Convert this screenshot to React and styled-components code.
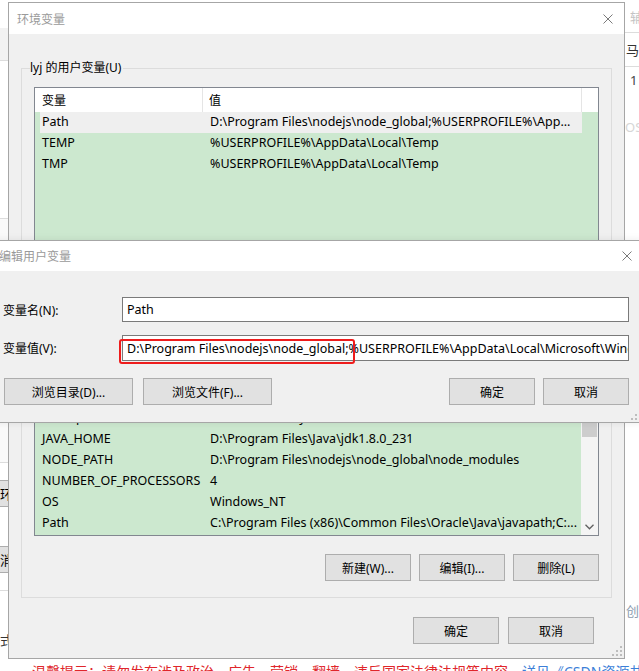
import React from 'react';
import styled, { createGlobalStyle } from 'styled-components';

const GlobalStyle = createGlobalStyle`
  html, body { margin: 0; padding: 0; background: #fff; }
  body {
    font-family: "Noto Sans", "Noto Sans CJK SC", sans-serif;
    font-size: 12px;
    color: #000;
    overflow: hidden;
  }
  * { box-sizing: border-box; }
`;

const UI_FONT = `"Noto Sans", "Noto Sans CJK SC", sans-serif`;

/* ---------- desktop & page behind ---------- */
const Desktop = styled.div`
  position: relative;
  width: 639px;
  height: 671px;
  overflow: hidden;
  background: #fff;
`;

const Page = styled.div`
  display: grid;
  grid-template-columns: 8px 1fr 14px;
  height: 100%;
  font-family: ${UI_FONT};
`;

const Rail = styled.div`
  display: flex;
  flex-direction: column;
  min-width: 0;
`;

const RailBand = styled.div`
  flex: none;
  height: ${p => p.$h}px;
  background: ${p => p.$bg || '#fff'};
  border-bottom: ${p => (p.$line ? '1px solid #dcdcdc' : '0')};
  display: flex;
  align-items: center;
  font-size: 13px;
  color: ${p => p.$color || '#333'};
  white-space: nowrap;
  padding-left: ${p => p.$pl || 0}px;
`;

const RailButton = styled.div`
  flex: none;
  margin-top: ${p => p.$mt}px;
  margin-left: -40px;
  width: 80px;
  height: 27px;
  border: 1px solid #adadad;
  background: #e1e1e1;
  font-size: 13px;
  display: flex;
  align-items: center;
  padding-left: 39px;
  white-space: nowrap;
`;

const RailText = styled.div`
  flex: none;
  margin-top: ${p => p.$mt}px;
  margin-left: ${p => p.$ml || 0}px;
  font-size: 13px;
  line-height: 18px;
  color: ${p => p.$color || '#333'};
  white-space: nowrap;
`;

const PageMiddle = styled.div`
  display: flex;
  flex-direction: column;
  min-width: 0;
`;

const Notice = styled.div`
  margin-top: 662px;
  padding-left: 24px;
  font-size: 14px;
  line-height: 20px;
  color: #e0262b;
  white-space: nowrap;
`;

const NoticeLink = styled.span`
  color: #3d7fd8;
`;

/* ---------- windows ---------- */
const MainWindow = styled.section`
  position: absolute;
  left: 8px;
  top: 2px;
  width: 617px;
  height: 657px;
  border: 1px solid #a6a6a6;
  background: #f0f0f0;
  display: flex;
  flex-direction: column;
  font-family: ${UI_FONT};
`;

const EditWindow = styled.section`
  position: absolute;
  left: -10px;
  top: 240px;
  width: 654px;
  height: 183px;
  border: 1px solid #a6a6a6;
  background: #f0f0f0;
  display: flex;
  flex-direction: column;
  font-family: ${UI_FONT};
  box-shadow: 0 0 8px rgba(0, 0, 0, 0.08);
`;

const TitleBar = styled.header`
  flex: none;
  height: ${p => p.$h}px;
  background: #fff;
  display: flex;
  align-items: center;
  justify-content: space-between;
  padding: 0 11px 0 8px;
`;

const TitleText = styled.span`
  font-size: 12px;
  color: #9a9a9a;
`;

const CloseGlyph = () => (
  <svg width="10" height="10" viewBox="0 0 10 10">
    <path d="M0.5 0.5 L9.5 9.5 M9.5 0.5 L0.5 9.5" stroke="#7a7a7a" strokeWidth="1" fill="none" />
  </svg>
);

const Grip = styled.div`
  position: absolute;
  right: 2px;
  bottom: 2px;
  width: 10px;
  height: 10px;
  display: flex;
`;

const GripGlyph = () => (
  <svg width="10" height="10" viewBox="0 0 10 10">
    {[[8, 0], [8, 4], [4, 4], [8, 8], [4, 8], [0, 8]].map(([x, y]) => (
      <rect key={`${x}-${y}`} x={x} y={y} width="2" height="2" fill="#bdbdbd" />
    ))}
  </svg>
);

/* ---------- main dialog body ---------- */
const DialogBody = styled.div`
  flex: 1;
  display: flex;
  flex-direction: column;
  padding: 26px 12px 0 12px;
`;

const GroupBox = styled.fieldset`
  margin: ${p => p.$mt || 0}px 0 0 0;
  padding: 11px 12px ${p => p.$pb}px 12px;
  border: 1px solid #dcdcdc;
  min-width: 0;
  display: flex;
  flex-direction: column;
`;

const Legend = styled.legend`
  margin-left: -4px;
  padding: 0 2px 0 0;
  font-size: 12px;
  line-height: 16px;
`;

const ListView = styled.div`
  height: ${p => p.$h}px;
  flex: none;
  border: 1px solid #828790;
  background: #cce8cf;
  display: flex;
  overflow: hidden;
`;

const ListMain = styled.div`
  flex: 1;
  display: flex;
  flex-direction: column;
  min-width: 0;
`;

const ListHeader = styled.div`
  flex: none;
  height: 24px;
  background: #fff;
  display: grid;
  grid-template-columns: 168px ${p => (p.$full ? '379px 1fr' : '1fr')};
`;

const HeaderCell = styled.div`
  display: flex;
  align-items: center;
  padding-left: ${p => p.$pl}px;
  border-right: 1px solid #e5e5e5;
  font-size: 12px;
`;

const HeaderFill = styled.div``;

const ListRows = styled.div`
  flex: 1;
  display: flex;
  flex-direction: column;
  justify-content: ${p => (p.$bottom ? 'flex-end' : 'flex-start')};
  padding-bottom: ${p => (p.$bottom ? 1 : 0)}px;
  overflow: hidden;
`;

const Row = styled.div`
  flex: none;
  height: 21px;
  margin-left: 5px;
  width: 542px;
  display: grid;
  grid-template-columns: 163px 1fr;
  align-items: center;
  background: ${p => (p.$selected ? '#efefef' : 'transparent')};
  font-size: 12.5px;
  line-height: 16px;
  white-space: nowrap;
`;

const Cell = styled.span`
  padding-left: ${p => p.$pl}px;
  padding-bottom: 1px;
  overflow: hidden;
`;

const ScrollBar = styled.div`
  flex: none;
  width: 17px;
  background: #f4f4f4;
  display: flex;
  flex-direction: column;
  align-items: center;
`;

const ScrollArrow = styled.div`
  flex: none;
  height: 17px;
  width: 17px;
  display: flex;
  align-items: center;
  justify-content: center;
  margin-top: ${p => (p.$down ? 'auto' : '0')};
`;

const ScrollThumb = styled.div`
  flex: none;
  width: 15px;
  margin-top: 33px;
  height: 36px;
  background: #cdcdcd;
`;

const ChevronDown = () => (
  <svg width="9" height="6" viewBox="0 0 9 6">
    <path d="M0.5 0.8 L4.5 4.8 L8.5 0.8" stroke="#606060" strokeWidth="1.3" fill="none" />
  </svg>
);

const ChevronUp = () => (
  <svg width="9" height="6" viewBox="0 0 9 6">
    <path d="M0.5 5.2 L4.5 1.2 L8.5 5.2" stroke="#606060" strokeWidth="1.3" fill="none" />
  </svg>
);

const ButtonRow = styled.div`
  display: flex;
  justify-content: ${p => p.$justify || 'flex-end'};
  gap: ${p => p.$gap || 9}px;
  margin-top: ${p => p.$mt || 0}px;
  margin-right: ${p => p.$mr || 0}px;
`;

const ButtonGroup = styled.div`
  display: flex;
  gap: ${p => p.$gap}px;
  margin-left: ${p => p.$ml || 0}px;
`;

const Button = styled.button`
  width: ${p => p.$w}px;
  height: 27px;
  border: 1px solid #adadad;
  background: #e1e1e1;
  font-family: ${UI_FONT};
  font-size: 12px;
  color: #000;
  padding: 0;
  display: flex;
  align-items: center;
  justify-content: center;
`;

/* ---------- edit dialog body ---------- */
const EditBody = styled.div`
  flex: 1;
  display: flex;
  flex-direction: column;
  padding: 26px 14px 0 12px;
`;

const FieldGrid = styled.div`
  display: grid;
  grid-template-columns: 119px 1fr;
  row-gap: 13px;
  align-items: center;
`;

const FieldLabel = styled.label`
  font-size: 12px;
  white-space: nowrap;
`;

const TextBox = styled.div`
  position: relative;
  height: ${p => p.$h}px;
  min-width: 0;
  border: 1px solid #7a7a7a;
  background: #fff;
  display: flex;
  align-items: center;
  padding-left: 4px;
  font-size: 12.5px;
  white-space: nowrap;
`;

const TextClip = styled.span`
  flex: 1;
  min-width: 0;
  overflow: hidden;
  display: block;
`;

const RedMark = styled.div`
  position: absolute;
  left: -4px;
  top: 3px;
  width: 236px;
  height: 25px;
  border: 2.5px solid #ee1c1c;
  border-radius: 3px;
  pointer-events: none;
`;

const userVars = [
  ['Path', 'D:\\Program Files\\nodejs\\node_global;%USERPROFILE%\\App...'],
  ['TEMP', '%USERPROFILE%\\AppData\\Local\\Temp'],
  ['TMP', '%USERPROFILE%\\AppData\\Local\\Temp'],
];

const systemVars = [
  ['ComSpec', 'C:\\WINDOWS\\system32\\cmd.exe'],
  ['JAVA_HOME', 'D:\\Program Files\\Java\\jdk1.8.0_231'],
  ['NODE_PATH', 'D:\\Program Files\\nodejs\\node_global\\node_modules'],
  ['NUMBER_OF_PROCESSORS', '4'],
  ['OS', 'Windows_NT'],
  ['Path', 'C:\\Program Files (x86)\\Common Files\\Oracle\\Java\\javapath;C:...'],
];

function VarList({ rows, height, scroll, selectedIndex }) {
  return (
    <ListView $h={height}>
      <ListMain>
        <ListHeader $full={!scroll}>
          <HeaderCell $pl={7}>变量</HeaderCell>
          <HeaderCell $pl={6}>值</HeaderCell>
          {!scroll && <HeaderFill />}
        </ListHeader>
        <ListRows $bottom={scroll}>
          {rows.map(([k, v], i) => (
            <Row key={k + i} $selected={i === selectedIndex}>
              <Cell $pl={2}>{k}</Cell>
              <Cell $pl={7}>{v}</Cell>
            </Row>
          ))}
        </ListRows>
      </ListMain>
      {scroll && (
        <ScrollBar>
          <ScrollArrow><ChevronUp /></ScrollArrow>
          <ScrollThumb />
          <ScrollArrow $down><ChevronDown /></ScrollArrow>
        </ScrollBar>
      )}
    </ListView>
  );
}

export default function App() {
  return (
    <>
      <GlobalStyle />
      <Desktop>
        <Page>
          <Rail>
            <RailBand $h={28} />
            <RailBand $h={33} $bg="#f2f2f2" $line />
            <RailBand $h={158} $line />
            <RailBand $h={244} $bg="#fafafa" $line />
            <RailButton $mt={17}>环境</RailButton>
            <RailButton $mt={39}>消息</RailButton>
            <RailBand $h={18} $line />
            <RailText $mt={40} $ml={-13}>格式</RailText>
          </Rail>
          <PageMiddle>
            <Notice>
              温馨提示：请勿发布涉及政治、广告、营销、翻墙、违反国家法律法规等内容，
              <NoticeLink>详见《CSDN资源共享规范》</NoticeLink>
            </Notice>
          </PageMiddle>
          <Rail>
            <RailBand $h={33} $line $color="#c4c4c4" $pl={5}>辅助</RailBand>
            <RailBand $h={34} $line $color="#333" $pl={1}>马克</RailBand>
            <RailText $mt={4} $ml={5} $color="#444">1</RailText>
            <RailText $mt={29} $ml={0} $color="#d6d6d6">OS</RailText>
            <RailText $mt={466} $ml={1} $color="#8a9aae">创建</RailText>
          </Rail>
        </Page>

        <MainWindow>
          <TitleBar $h={31}>
            <TitleText>环境变量</TitleText>
            <CloseGlyph />
          </TitleBar>
          <DialogBody>
            <GroupBox $pb={12}>
              <Legend>lyj 的用户变量(U)</Legend>
              <VarList rows={userVars} height={170} selectedIndex={0} />
              <ButtonRow $mt={10}>
                <Button $w={86}>新建(N)...</Button>
                <Button $w={86}>编辑(E)...</Button>
                <Button $w={86}>删除(D)</Button>
              </ButtonRow>
            </GroupBox>
            <GroupBox $mt={16} $pb={16}>
              <Legend>系统变量(S)</Legend>
              <VarList rows={systemVars} height={186} scroll selectedIndex={-1} />
              <ButtonRow $mt={18} $gap={8}>
                <Button $w={86}>新建(W)...</Button>
                <Button $w={86}>编辑(I)...</Button>
                <Button $w={86}>删除(L)</Button>
              </ButtonRow>
            </GroupBox>
            <ButtonRow $mt={19} $mr={18} $gap={9}>
              <Button $w={86}>确定</Button>
              <Button $w={86}>取消</Button>
            </ButtonRow>
          </DialogBody>
          <Grip><GripGlyph /></Grip>
        </MainWindow>

        <EditWindow>
          <TitleBar $h={30}>
            <TitleText>编辑用户变量</TitleText>
            <CloseGlyph />
          </TitleBar>
          <EditBody>
            <FieldGrid>
              <FieldLabel>变量名(N):</FieldLabel>
              <TextBox $h={25}><TextClip>Path</TextClip></TextBox>
              <FieldLabel>变量值(V):</FieldLabel>
              <TextBox $h={26}>
                <TextClip>D:\Program Files\nodejs\node_global;%USERPROFILE%\AppData\Local\Microsoft\WindowsApps;</TextClip>
                <RedMark />
              </TextBox>
            </FieldGrid>
            <ButtonRow $mt={17} $justify="space-between">
              <ButtonGroup $gap={10} $ml={1}>
                <Button $w={129}>浏览目录(D)...</Button>
                <Button $w={129}>浏览文件(F)...</Button>
              </ButtonGroup>
              <ButtonGroup $gap={8}>
                <Button $w={86}>确定</Button>
                <Button $w={86}>取消</Button>
              </ButtonGroup>
            </ButtonRow>
          </EditBody>
          <Grip><GripGlyph /></Grip>
        </EditWindow>
      </Desktop>
    </>
  );
}
